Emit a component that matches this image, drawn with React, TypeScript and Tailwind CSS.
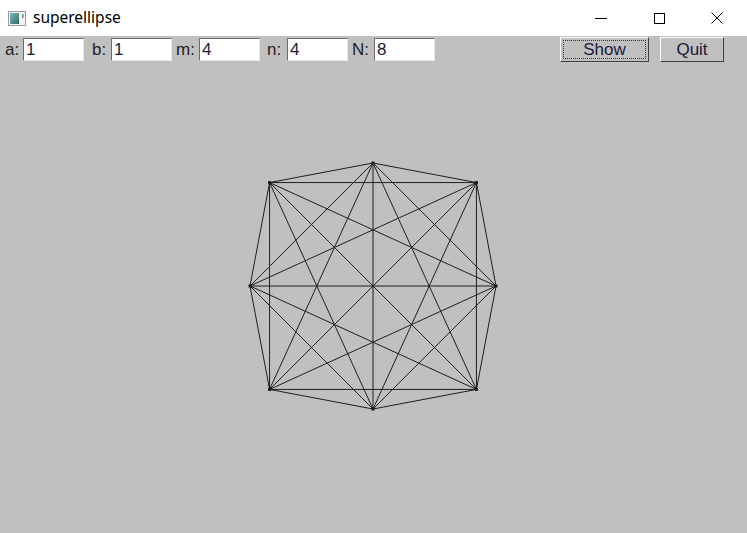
import React from "react";

const fields = [
  { label: "a:", value: "1", ml: "ml-[5px]", lw: "w-[18px]" },
  { label: "b:", value: "1", ml: "ml-[8px]", lw: "w-[19px]" },
  { label: "m:", value: "4", ml: "ml-[4px]", lw: "w-[23px]" },
  { label: "n:", value: "4", ml: "ml-[7px]", lw: "w-[20px]" },
  { label: "N:", value: "8", ml: "ml-[4px]", lw: "w-[22px]" },
];

// superellipse points, center (373,224) in canvas coords
const cx = 373;
const cy = 224;
const r = 123;
const pts = Array.from({ length: 8 }, (_, i) => {
  const t = (i * Math.PI) / 4;
  const c = Math.cos(t);
  const s = Math.sin(t);
  const x = Math.sign(c) * Math.pow(Math.abs(c), 0.5) * r;
  const y = Math.sign(s) * Math.pow(Math.abs(s), 0.5) * r;
  return [cx + x, cy - y];
});

const edges: [number, number][] = [];
for (let i = 0; i < 8; i++) for (let j = i + 1; j < 8; j++) edges.push([i, j]);

export default function App() {
  return (
    <div className="w-[747px] h-[533px] flex flex-col bg-[#c0c0c0] overflow-hidden" style={{ fontFamily: "'Liberation Sans', Arial, sans-serif" }}>
      {/* Title bar */}
      <div className="h-[36px] bg-white flex items-center shrink-0">
        <svg width="18" height="15" viewBox="0 0 18 15" className="ml-[8px]">
          <rect x="0.5" y="0.5" width="17" height="14" fill="#f4f4f4" stroke="#9a9a9a" />
          <defs>
            <linearGradient id="g" x1="0" y1="0" x2="1" y2="1">
              <stop offset="0" stopColor="#7fb6c8" />
              <stop offset="1" stopColor="#2f6f5a" />
            </linearGradient>
          </defs>
          <rect x="2" y="2" width="9" height="11" fill="url(#g)" />
          <rect x="14" y="3" width="1.5" height="4" fill="#5a8a7a" />
        </svg>
        <span className="ml-[7px] text-[15.5px] text-black" style={{ fontFamily: "'Noto Sans', sans-serif" }}>superellipse</span>
        <div className="ml-auto flex items-center mr-[1px]">
          <div className="w-[58px] h-[36px] flex items-center justify-center">
            <div className="w-[12px] h-px bg-black" />
          </div>
          <div className="w-[58px] h-[36px] flex items-center justify-center">
            <div className="w-[11px] h-[11px] border border-black" />
          </div>
          <div className="w-[58px] h-[36px] flex items-center justify-center">
            <svg width="12" height="12" viewBox="0 0 12 12">
              <path d="M0.5 0.5L11.5 11.5M11.5 0.5L0.5 11.5" stroke="black" strokeWidth="1" />
            </svg>
          </div>
        </div>
      </div>

      {/* Toolbar */}
      <div className="h-[26px] flex items-center shrink-0">
        {fields.map((f) => (
          <div key={f.label} className={`flex items-center ${f.ml}`}>
            <span className={`${f.lw} text-[17px] text-[#222] leading-none`}>{f.label}</span>
            <div className="w-[61px] h-[23px] bg-white border border-t-[#6b6b6b] border-l-[#6b6b6b] border-r-[#e6e6e6] border-b-[#e6e6e6] flex items-center pl-[2px] text-[17px] text-[#1a1a3a] leading-none">
              {f.value}
            </div>
          </div>
        ))}
        <div className="ml-[125px] w-[89px] h-[25px] bg-[#c0c0c0] border border-t-white border-l-white border-r-[#404040] border-b-[#404040] p-[2px]">
          <div className="w-full h-full border border-dotted border-[#333] flex items-center justify-center text-[17px] text-[#1a1a3a] leading-none">Show</div>
        </div>
        <div className="ml-[11px] w-[64px] h-[25px] bg-[#c0c0c0] border border-t-white border-l-white border-r-[#404040] border-b-[#404040] flex items-center justify-center text-[17px] text-[#1a1a3a] leading-none">
          Quit
        </div>
      </div>

      {/* Canvas */}
      <svg width="747" height="471" className="block">
        {edges.map(([i, j]) => (
          <line key={`${i}-${j}`} x1={pts[i][0]} y1={pts[i][1]} x2={pts[j][0]} y2={pts[j][1]} stroke="#1f1f1f" strokeWidth="1" />
        ))}
        {pts.map((p, i) => (
          <rect key={i} x={p[0] - 1.5} y={p[1] - 1.5} width="3" height="3" fill="#1a1a1a" />
        ))}
      </svg>
    </div>
  );
}
